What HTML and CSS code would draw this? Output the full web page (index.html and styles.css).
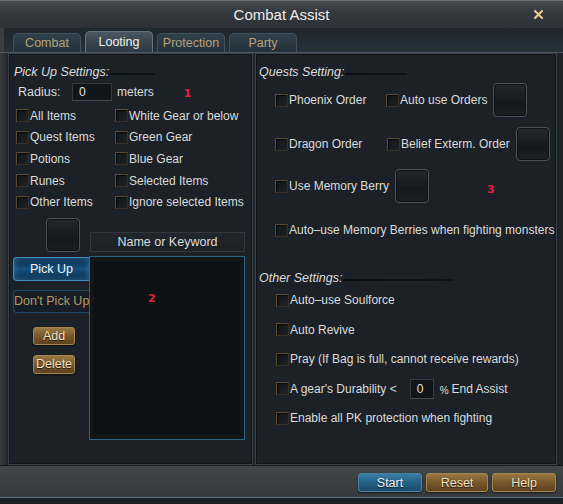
FILE: index.html
```html
<!DOCTYPE html>
<html lang="en">
<head>
  <meta charset="UTF-8" />
  <meta name="viewport" content="width=device-width, initial-scale=1" />
  <title>Combat Assist</title>
  <link rel="stylesheet" href="styles.css">
</head>
<body>
  <div class="window">
    <header class="titlebar">
      <span></span>
      <h1>Combat Assist</h1>
      <span class="close">
        <svg width="9" height="9" viewBox="0 0 9 9"><path d="M1 1L8 8M8 1L1 8" stroke="#e9cf96" stroke-width="2" stroke-linecap="round"/></svg>
      </span>
    </header>

    <nav class="tabs">
      <span class="tab">Combat</span>
      <span class="tab active">Looting</span>
      <span class="tab">Protection</span>
      <span class="tab">Party</span>
    </nav>

    <main class="content">
      <!-- Pick up side -->
      <section class="panel pickup">
        <h2 class="heading heading-pick">Pick Up Settings:</h2>
        <div class="radius-row">
          <span class="radius-label">Radius:</span>
          <span class="field radius-field">0</span>
          <span class="meters">meters</span>
          <span class="mark mark-1">1</span>
        </div>

        <div class="item-grid">
          <label class="check"><span class="box"></span>All Items</label>
          <label class="check"><span class="box"></span>White Gear or below</label>
          <label class="check"><span class="box"></span>Quest Items</label>
          <label class="check"><span class="box"></span>Green Gear</label>
          <label class="check"><span class="box"></span>Potions</label>
          <label class="check"><span class="box"></span>Blue Gear</label>
          <label class="check"><span class="box"></span>Runes</label>
          <label class="check"><span class="box"></span>Selected Items</label>
          <label class="check"><span class="box"></span>Other Items</label>
          <label class="check"><span class="box"></span>Ignore selected Items</label>
        </div>

        <div class="lower">
          <div class="slot slot-pick"></div>
          <div class="list-head">Name or Keyword</div>
          <div class="side">
            <button class="side-btn on">Pick Up</button>
            <button class="side-btn off">Don't Pick Up</button>
            <button class="gold-btn small add">Add</button>
            <button class="gold-btn small delete">Delete</button>
          </div>
          <div class="list"><span class="mark">2</span></div>
        </div>
      </section>

      <!-- Quests + other -->
      <section class="panel settings">
        <h2 class="heading heading-quest">Quests Setting:</h2>

        <div class="quest-row row-1">
          <label class="check"><span class="box"></span>Phoenix Order</label>
          <div class="with-slot">
            <label class="check"><span class="box"></span>Auto use Orders</label>
            <div class="slot"></div>
          </div>
        </div>
        <div class="quest-row row-2">
          <label class="check"><span class="box"></span>Dragon Order</label>
          <div class="with-slot">
            <label class="check"><span class="box"></span>Belief Exterm. Order</label>
            <div class="slot"></div>
          </div>
        </div>
        <div class="quest-row row-3">
          <div class="with-slot">
            <label class="check"><span class="box"></span>Use Memory Berry</label>
            <div class="slot"></div>
            <span class="mark mark-3">3</span>
          </div>
        </div>
        <div class="berry-row">
          <label class="check"><span class="box"></span>Auto–use Memory Berries when fighting monsters</label>
        </div>

        <h2 class="heading heading-other">Other Settings:</h2>
        <div class="other-list">
          <label class="check"><span class="box"></span>Auto–use Soulforce</label>
          <label class="check"><span class="box"></span>Auto Revive</label>
          <label class="check"><span class="box"></span>Pray (If Bag is full, cannot receive rewards)</label>
          <div class="durability">
            <label class="check"><span class="box"></span>A gear's Durability &lt;</label>
            <span class="field pct-field">0</span>
            <span class="pct">%</span>
            <span>End Assist</span>
          </div>
          <label class="check"><span class="box"></span>Enable all PK protection when fighting</label>
        </div>
      </section>
    </main>

    <footer class="footer">
      <button class="blue-btn">Start</button>
      <button class="gold-btn wide">Reset</button>
      <button class="gold-btn wide help">Help</button>
    </footer>
    <div class="strip"></div>
  </div>
</body>
</html>
```

FILE: styles.css
```css
* {
  margin: 0;
  padding: 0;
  box-sizing: border-box;
}

body {
  background: #1a1d20;
  font-family: 'Liberation Sans', Arial, sans-serif;
  font-size: 12px;
  color: #dcdcdc;
}

button {
  font-family: inherit;
  font-size: 12px;
  cursor: pointer;
}

.window {
  width: 563px;
  height: 504px;
  display: flex;
  flex-direction: column;
  background: linear-gradient(90deg, #3b3c3b 0px, #2a2f33 5px, #232a30 12px, #232a30 100%);
  overflow: hidden;
}

/* Title */
.titlebar {
  height: 28px;
  display: grid;
  grid-template-columns: 1fr auto 1fr;
  align-items: center;
  background: linear-gradient(180deg, #474c50 0%, #353b40 35%, #2b3136 100%);
  border-top: 1px solid #6b6f70;
}

.titlebar h1 {
  font-weight: normal;
  font-size: 15px;
  color: #ececec;
  padding-bottom: 1px;
}

.close {
  justify-self: end;
  margin-right: 20px;
  display: flex;
}

/* Tabs */
.tabs {
  height: 24px;
  display: flex;
  align-items: flex-end;
  gap: 4px;
  padding-left: 13px;
  background: linear-gradient(180deg, #1f272d 0%, #26313a 100%);
  border-left: 4px solid #3c3d3c;
}

.tabs .tab:first-child {
  margin-left: -4px;
}

.tab {
  width: 68px;
  height: 19px;
  display: flex;
  align-items: center;
  justify-content: center;
  font-size: 12.5px;
  color: #b8a27a;
  background: linear-gradient(180deg, #30404b 0%, #24313a 100%);
  border: 1px solid #41525d;
  border-bottom: none;
  border-radius: 5px 5px 0 0;
}

.tab.active {
  height: 21px;
  color: #f2f2f2;
  background: linear-gradient(180deg, #4a5862 0%, #35424c 60%, #2e3a43 100%);
  border-color: #63727c;
}

/* Content */
.content {
  height: 413px;
  display: grid;
  grid-template-columns: 245px 302px;
  gap: 2px;
  padding: 0 6px 0 8px;
  border-top: 1px solid #4b5a66;
  background: linear-gradient(90deg, #3b3c3b 0px, #2c3033 5px, #1d2328 8px);
}

.panel {
  background: #1b2126;
  border: 1px solid #3a4249;
  box-shadow: inset 0 0 0 1px #12161a;
}

.heading {
  display: flex;
  align-items: center;
  height: 16px;
  margin-top: 10px;
  font-size: 12.5px;
  font-weight: normal;
  font-style: italic;
  color: #dcdcdc;
}

.heading::after {
  content: '';
  height: 2px;
  margin-left: 1px;
  margin-top: 3px;
  background: linear-gradient(90deg, #0b0e10, #11151a);
}

.heading-pick { padding-left: 5px; }
.heading-pick::after { width: 45px; }
.heading-quest { padding-left: 3px; }
.heading-quest::after { width: 62px; }
.heading-other { padding-left: 3px; margin-top: 30px; }
.heading-other::after { width: 110px; }

.check {
  display: flex;
  align-items: center;
  white-space: nowrap;
}

.box {
  width: 13px;
  height: 13px;
  flex: none;
  margin-right: 1px;
  border: 1px solid #5a4a31;
  border-right-color: #3a3022;
  border-bottom-color: #3a3022;
  background: linear-gradient(135deg, #121517 0%, #1f2224 100%);
  box-shadow: inset 1px 1px 1px rgba(0, 0, 0, 0.6);
}

.field {
  display: flex;
  align-items: center;
  background: #121518;
  border: 1px solid #343a3f;
  border-bottom-color: #464c51;
  color: #e2e2e2;
}

.slot {
  width: 34px;
  height: 34px;
  flex: none;
  border: 1px solid #4c5257;
  border-radius: 4px;
  background: linear-gradient(180deg, #23272b 0%, #16191c 60%, #1c1f22 100%);
  box-shadow: inset 0 0 0 1px #0f1113;
}

.mark {
  font-family: 'DejaVu Sans', sans-serif;
  font-weight: bold;
  font-size: 11px;
  color: #e0203f;
}

/* Pick up panel */
.radius-row {
  display: flex;
  align-items: center;
  height: 18px;
  margin-top: 3px;
  padding-left: 9px;
}

.radius-label {
  width: 54px;
  font-size: 12.5px;
}

.radius-field {
  width: 40px;
  height: 18px;
  padding-left: 6px;
}

.meters {
  margin-left: 5px;
}

.mark-1 {
  margin-left: 30px;
  margin-top: 2px;
}

.item-grid {
  display: grid;
  grid-template-columns: 99px auto;
  grid-auto-rows: 21.6px;
  margin-top: 4px;
  padding-left: 7px;
}

.lower {
  display: grid;
  grid-template-columns: 80px 156px;
  grid-template-rows: 34px auto;
  row-gap: 4px;
  margin-top: 5px;
}

.slot-pick {
  margin-left: 37px;
}

.list-head {
  align-self: end;
  height: 20px;
  margin-left: 1px;
  display: flex;
  align-items: center;
  justify-content: center;
  font-size: 12.5px;
  background: linear-gradient(180deg, #20262b, #1b2025);
  border: 1px solid #30373d;
}

.side {
  display: flex;
  flex-direction: column;
  align-items: flex-start;
}

.side-btn {
  width: 76px;
  margin-left: 4px;
  border-radius: 4px 0 0 4px;
  font-size: 12.5px;
  white-space: nowrap;
}

.side-btn.on {
  height: 24px;
  margin-top: 1px;
  color: #f4f4f4;
  background: linear-gradient(180deg, #0c2a44 0%, #13507c 50%, #0c2d4a 100%);
  border: 1px solid #3d8cc0;
  border-right: none;
  box-shadow: inset 0 0 6px rgba(80, 170, 230, 0.5);
}

.side-btn.off {
  height: 23px;
  margin-top: 9px;
  color: #b49b6c;
  background: #161d24;
  border: 1px solid #1f4865;
  border-right: none;
}

.gold-btn {
  color: #f1e2c2;
  background: linear-gradient(180deg, #9a7843 0%, #7a5a2c 45%, #5e421f 100%);
  border: 1px solid #a6864f;
  border-radius: 3px;
  box-shadow: 0 1px 2px rgba(0, 0, 0, 0.6);
  text-shadow: 0 1px 1px rgba(0, 0, 0, 0.7);
}

.gold-btn.small {
  width: 42px;
  margin-left: 24px;
  font-size: 12.5px;
}

.gold-btn.add {
  height: 18px;
  margin-top: 14px;
}

.gold-btn.delete {
  height: 19px;
  margin-top: 10px;
}

.list {
  height: 184px;
  padding: 34px 0 0 58px;
  background: #0e1114;
  border: 1px solid #2a6581;
  box-shadow: inset 0 0 0 4px #121619;
}

/* Settings panel */
.quest-row {
  display: grid;
  grid-template-columns: 111px auto;
  align-items: center;
  height: 34px;
  padding-left: 19px;
}

.row-1 { margin-top: 3px; }
.row-2 { margin-top: 10px; }
.row-2 .with-slot { padding-left: 1px; }
.row-3 { margin-top: 8px; grid-template-columns: auto; }

.with-slot {
  display: flex;
  align-items: center;
}

.with-slot .slot {
  margin-left: 6px;
}

.mark-3 {
  margin-left: 58px;
  margin-top: 6px;
}

.berry-row {
  height: 20px;
  margin-top: 17px;
  padding-left: 19px;
  display: flex;
  align-items: center;
}

.other-list {
  display: flex;
  flex-direction: column;
  gap: 9.5px;
  margin-top: 4px;
  padding-left: 20px;
}

.other-list > * {
  height: 20px;
}

.durability {
  display: flex;
  align-items: center;
}

.pct-field {
  width: 24px;
  height: 20px;
  margin-left: 13px;
  padding-left: 6px;
}

.pct {
  margin-left: 6px;
  margin-right: 3px;
  font-size: 10px;
  margin-top: 3px;
}

/* Footer */
.footer {
  height: 32px;
  display: flex;
  align-items: center;
  justify-content: flex-end;
  gap: 4px;
  padding: 2px 7px 0 0;
  border-top: 1px solid #15191c;
  background: linear-gradient(180deg, #44474a 0%, #3c3f42 60%, #36393c 100%);
}

.footer button {
  height: 19px;
  font-size: 12.5px;
}

.blue-btn {
  width: 64px;
  color: #f4f4f4;
  background: linear-gradient(180deg, #3a7ea6 0%, #266489 45%, #1a4b69 100%);
  border: 1px solid #4883a6;
  border-radius: 3px;
  box-shadow: 0 1px 2px rgba(0, 0, 0, 0.6);
  text-shadow: 0 1px 1px rgba(0, 0, 0, 0.7);
}

.gold-btn.wide {
  width: 62px;
}

.gold-btn.help {
  width: 64px;
}

.strip {
  height: 7px;
  background: #1b2024;
  border-top: 1px solid #5b6f80;
}
```
